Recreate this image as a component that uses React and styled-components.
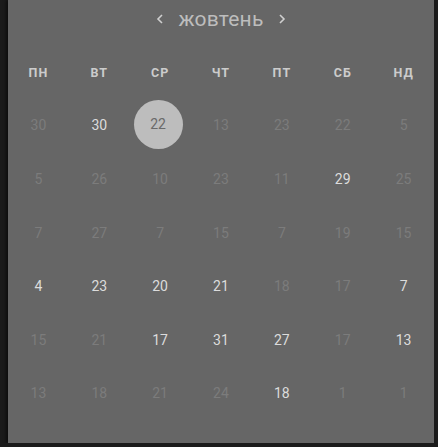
import React from 'react'
import styled, { createGlobalStyle } from 'styled-components'

const GlobalStyle = createGlobalStyle`
  html, body {
    margin: 0;
    padding: 0;
    background: #1b1b1b;
    font-family: Roboto, "Noto Sans", sans-serif;
  }
`

const Panel = styled.div`
  margin: 0 4px 0 8px;
  height: 443px;
  background: #666666;
  box-shadow: -2px 0 3px rgba(0, 0, 0, 0.5);
  overflow: hidden;
`

const Header = styled.div`
  height: 38px;
  margin-bottom: 8px;
  display: flex;
  align-items: center;
  justify-content: center;
  gap: 14px;
`

const Title = styled.span`
  font-size: 21px;
  color: #bdbdbd;
  letter-spacing: 0.2px;
`

const Chevron = styled.button`
  border: 0;
  background: none;
  padding: 0;
  display: flex;
  color: #cfcfcf;
  cursor: pointer;
`

const Grid = styled.div`
  display: grid;
  grid-template-columns: repeat(7, 1fr);
  grid-auto-rows: 53.6px;
`

const WeekDay = styled.div`
  display: flex;
  align-items: center;
  justify-content: center;
  font-size: 12.5px;
  font-weight: 700;
  letter-spacing: 1px;
  color: #cccccc;
`

const Cell = styled.div`
  display: flex;
  align-items: center;
  justify-content: center;
  padding-bottom: 2px;
  font-size: 14px;
  color: ${p => (p.$active ? '#dcdcdc' : '#7c7c7c')};
`

const Selected = styled.span`
  width: 49px;
  height: 49px;
  border-radius: 50%;
  background: #bdbdbd;
  color: #6a6a6a;
  display: flex;
  align-items: center;
  justify-content: center;
  font-size: 14px;
  margin-left: -4px;
  margin-bottom: 2px;
`

const weekDays = ['пн', 'вт', 'ср', 'чт', 'пт', 'сб', 'нд']

// [number, bright] — 's' marks the selected day
const days = [
  [30, 0], [30, 1], [22, 's'], [13, 0], [23, 0], [22, 0], [5, 0],
  [5, 0], [26, 0], [10, 0], [23, 0], [11, 0], [29, 1], [25, 0],
  [7, 0], [27, 0], [7, 0], [15, 0], [7, 0], [19, 0], [15, 0],
  [4, 1], [23, 1], [20, 1], [21, 1], [18, 0], [17, 0], [7, 1],
  [15, 0], [21, 0], [17, 1], [31, 1], [27, 1], [17, 0], [13, 1],
  [13, 0], [18, 0], [21, 0], [24, 0], [18, 1], [1, 0], [1, 0],
]

const Arrow = ({ left }) => (
  <svg width="8" height="12" viewBox="0 0 8 12" fill="none" stroke="currentColor" strokeWidth="1.6">
    <path d={left ? 'M6 2 L2 6 L6 10' : 'M2 2 L6 6 L2 10'} />
  </svg>
)

export default function App() {
  return (
    <>
      <GlobalStyle />
      <Panel>
        <Header>
          <Chevron><Arrow left /></Chevron>
          <Title>жовтень</Title>
          <Chevron><Arrow /></Chevron>
        </Header>
        <Grid>
          {weekDays.map(d => (
            <WeekDay key={d}>{d.toUpperCase()}</WeekDay>
          ))}
          {days.map(([n, s], i) => (
            <Cell key={i} $active={s === 1}>
              {s === 's' ? <Selected>{n}</Selected> : n}
            </Cell>
          ))}
        </Grid>
      </Panel>
    </>
  )
}
